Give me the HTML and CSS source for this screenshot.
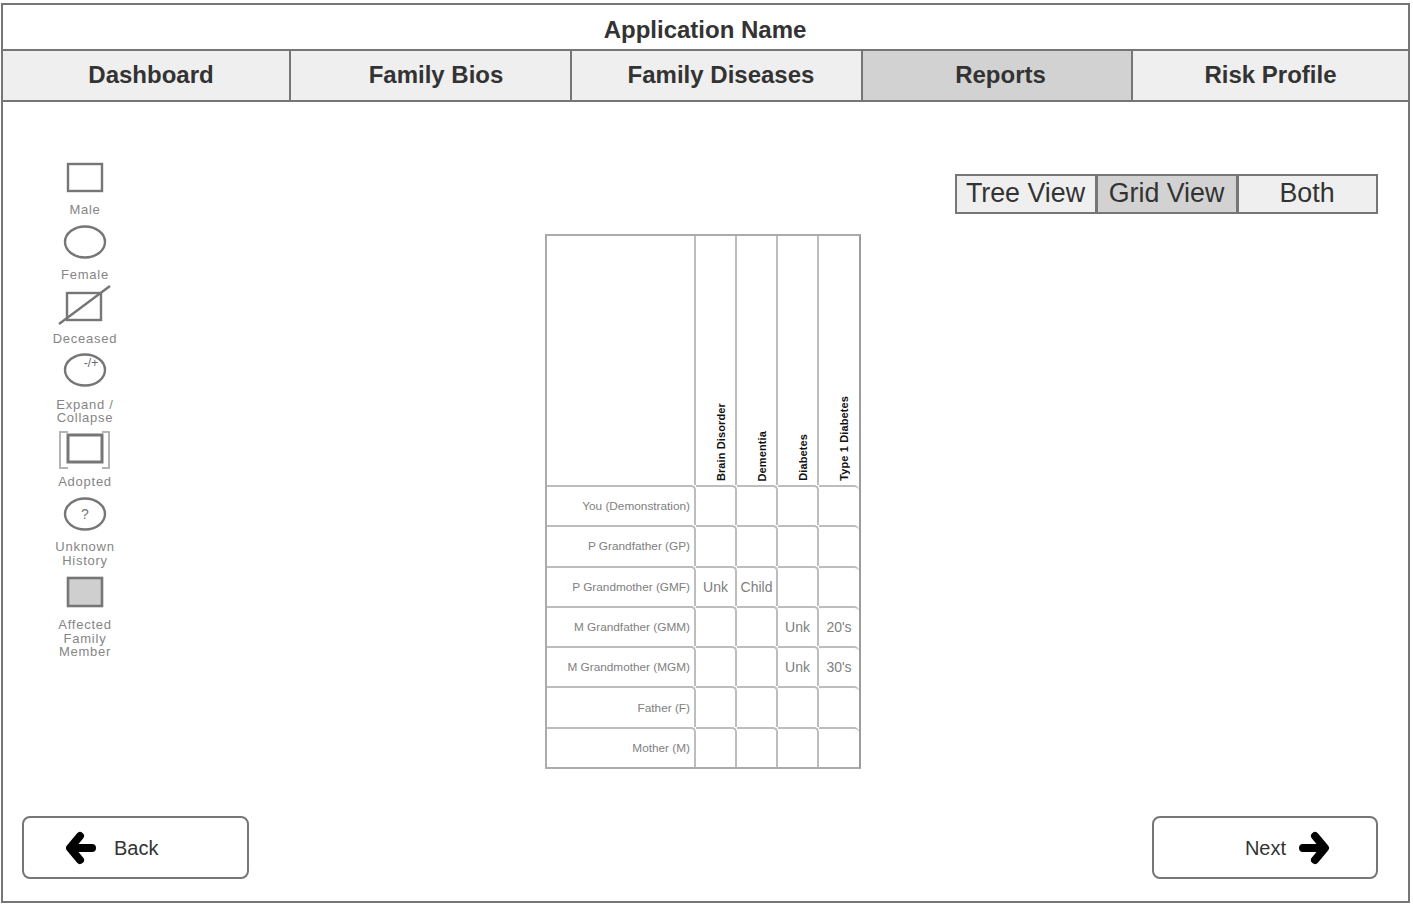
FILE: index.html
```html
<!DOCTYPE html>
<html lang="en">
<head>
<meta charset="utf-8">
<title>Application Name</title>
<link rel="stylesheet" href="styles.css">
</head>
<body>
<div class="frame">
  <header class="title">Application Name</header>
  <nav class="tabs">
    <a class="tab tab-dash">Dashboard</a>
    <a class="tab tab-bios">Family Bios</a>
    <a class="tab tab-dis">Family Diseases</a>
    <a class="tab tab-rep active">Reports</a>
    <a class="tab tab-risk">Risk Profile</a>
  </nav>
  <main class="main">
    <aside class="legend">
      <div class="item">
        <svg class="ico" width="60" height="43" viewBox="0 0 60 43"><rect class="s" x="13" y="4" width="34" height="27"/></svg>
        <div class="lbl">Male</div>
      </div>
      <div class="item">
        <svg class="ico" width="60" height="51" viewBox="0 0 60 51"><ellipse class="s" cx="30" cy="25" rx="20" ry="15.5"/></svg>
        <div class="lbl">Female</div>
      </div>
      <div class="item">
        <svg class="ico" width="60" height="51" viewBox="0 0 60 51"><rect class="s" x="12" y="12" width="34" height="27"/><line class="s" x1="4" y1="43" x2="55" y2="5"/></svg>
        <div class="lbl">Deceased</div>
      </div>
      <div class="item">
        <svg class="ico" width="60" height="52" viewBox="0 0 60 52"><ellipse class="s" cx="30" cy="24" rx="20" ry="15.5"/><text class="mini" x="36" y="21" text-anchor="middle">-/+</text></svg>
        <div class="lbl">Expand /<br>Collapse</div>
      </div>
      <div class="item">
        <svg class="ico" width="60" height="50" viewBox="0 0 60 50"><path class="b" d="M13 7H5V43H13M47 7H54V43H47"/><rect class="s thick" x="13" y="10" width="34" height="27"/></svg>
        <div class="lbl">Adopted</div>
      </div>
      <div class="item">
        <svg class="ico" width="60" height="52" viewBox="0 0 60 52"><ellipse class="s" cx="30" cy="26" rx="20" ry="15.5"/><text class="q" x="30" y="31" text-anchor="middle">?</text></svg>
        <div class="lbl">Unknown<br>History</div>
      </div>
      <div class="item">
        <svg class="ico" width="60" height="51" viewBox="0 0 60 51"><rect class="s fill" x="13" y="11" width="34" height="28"/></svg>
        <div class="lbl">Affected<br>Family<br>Member</div>
      </div>
    </aside>
    <section class="center">
      <table class="grid">
        <colgroup><col class="c0"><col class="c"><col class="c"><col class="c"><col></colgroup>
        <thead>
          <tr class="head">
            <th></th>
            <th><span class="rot">Brain Disorder</span></th>
            <th><span class="rot">Dementia</span></th>
            <th><span class="rot">Diabetes</span></th>
            <th><span class="rot">Type 1 Diabetes</span></th>
          </tr>
        </thead>
        <tbody>
          <tr><th>You (Demonstration)</th><td></td><td></td><td></td><td></td></tr>
          <tr><th>P Grandfather (GP)</th><td></td><td></td><td></td><td></td></tr>
          <tr><th>P Grandmother (GMF)</th><td>Unk</td><td>Child</td><td></td><td></td></tr>
          <tr><th>M Grandfather (GMM)</th><td></td><td></td><td>Unk</td><td>20's</td></tr>
          <tr><th>M Grandmother (MGM)</th><td></td><td></td><td>Unk</td><td>30's</td></tr>
          <tr><th>Father (F)</th><td></td><td></td><td></td><td></td></tr>
          <tr><th>Mother (M)</th><td></td><td></td><td></td><td></td></tr>
        </tbody>
      </table>
    </section>
    <div class="switch">
      <a class="opt">Tree View</a>
      <a class="opt on">Grid View</a>
      <a class="opt">Both</a>
    </div>
  </main>
  <footer class="foot">
    <a class="btn btn-back">
      <svg class="arrow" width="32" height="34" viewBox="0 0 32 34"><path d="M27 17H6M15 5L5 17L15 29"/></svg>
      <span class="btn-t">Back</span>
    </a>
    <a class="btn btn-next">
      <span class="btn-t">Next</span>
      <svg class="arrow" width="32" height="34" viewBox="0 0 32 34"><path d="M5 17H26M17 5L27 17L17 29"/></svg>
    </a>
  </footer>
</div>
</body>
</html>
```
FILE: styles.css
```css
* { box-sizing: border-box; }
html, body { background: #fff; }
body {
  margin: 3px 3px 3px 1px;
  font-family: "Liberation Sans", Arial, sans-serif;
  color: #333;
}
.frame {
  width: 1409px;
  height: 900px;
  border: 2px solid #767676;
  display: flex;
  flex-direction: column;
}
.title {
  height: 44px;
  display: flex;
  align-items: center;
  justify-content: center;
  font-weight: 700;
  font-size: 24px;
  padding-top: 6px;
  padding-right: 1px;
}
.tabs {
  display: flex;
  height: 53px;
  border-top: 2px solid #767676;
  border-bottom: 2px solid #767676;
}
.tab {
  display: flex;
  align-items: center;
  justify-content: center;
  background: #efefef;
  font-weight: 700;
  font-size: 24px;
  border-right: 2px solid #767676;
  padding-left: 9px;
  padding-bottom: 2px;
}
.tab-dash { width: 288px; padding-left: 10px; }
.tab-bios { width: 281px; padding-left: 11px; }
.tab-dis { width: 291px; }
.tab-rep { width: 270px; padding-left: 7px; }
.tab-risk { flex: 1; border-right: 0; padding-left: 0; }
.tab.active { background: #d2d2d2; }

.main {
  flex: 1;
  display: grid;
  grid-template-columns: 542px 410px 1fr;
  padding-right: 30px;
  padding-top: 58px;
  align-items: start;
}
.legend { width: 164px; display: flex; flex-direction: column; }
.item { display: flex; flex-direction: column; align-items: center; }
.ico { display: block; }
.lbl {
  font-size: 13px;
  line-height: 13.5px;
  letter-spacing: .75px;
  color: #858585;
  text-align: center;
}
.s { fill: none; stroke: #767676; stroke-width: 2.4; }
.s.thick { stroke-width: 3; }
.s.fill { fill: #cfcfcf; stroke-width: 2.6; }
.b { fill: none; stroke: #b4b4b4; stroke-width: 2; }
.mini { font-size: 12px; fill: #666; font-family: "Liberation Sans", Arial, sans-serif; }
.q { font-size: 14px; fill: #777; font-family: "Liberation Sans", Arial, sans-serif; }

.center { margin-top: 74px; }
.grid {
  width: 316px;
  height: 535px;
  table-layout: fixed;
  border-collapse: separate;
  border-spacing: 0;
  border: 2px solid #ababab;
  border-right-color: #9c9c9c;
}
.c0 { width: 149px; }
.c { width: 41px; }
.grid th, .grid td { padding: 0; border-right: 2px solid #bdbdbd; }
.grid tr > :last-child { border-right: 0; }
.grid .head { height: 249px; }
.grid .head th { vertical-align: bottom; padding: 0 0 3px 10px; text-align: center; line-height: 12px; }
.rot {
  display: inline-block;
  writing-mode: vertical-rl;
  transform: rotate(180deg);
  font-size: 11px;
  letter-spacing: .12px;
  font-weight: 700;
  color: #111;
  white-space: nowrap;
}
.grid tbody tr { height: 40.3px; }
.grid tbody th, .grid tbody td {
  border-top: 2px solid #bdbdbd;
  border-top-right-radius: 5px;
  font-weight: 400;
  color: #808080;
}
.grid tbody th { font-size: 11.8px; text-align: right; padding-right: 4px; }
.grid tbody td { font-size: 14px; text-align: center; }

.switch {
  margin-top: 14px;
  width: 423px;
  height: 40px;
  display: grid;
  grid-template-columns: 138px 144px 1fr;
  border: 2px solid #767676;
  background: #767676;
  font-size: 26.8px;
}
.opt {
  display: flex;
  align-items: center;
  justify-content: center;
  background: #efefef;
  padding-bottom: 2px;
  padding-right: 1px;
}
.opt.on { background: #d2d2d2; margin: 0 3px; }

.foot {
  display: flex;
  justify-content: space-between;
  padding: 0 30px 22px 19px;
}
.btn {
  width: 227px;
  height: 63px;
  border: 2px solid #767676;
  border-radius: 8px;
  display: flex;
  align-items: center;
  font-size: 20px;
  background: #fff;
}
.btn-t { padding-top: 1px; }
.btn-next { width: 226px; justify-content: flex-end; padding-right: 46px; }
.btn-back { padding-left: 41px; }
.btn-next .arrow { margin-left: 12px; }
.btn-back .arrow { margin-right: 17px; }
.arrow { fill: none; stroke: #000; stroke-width: 8; stroke-linecap: round; stroke-linejoin: round; }
```
